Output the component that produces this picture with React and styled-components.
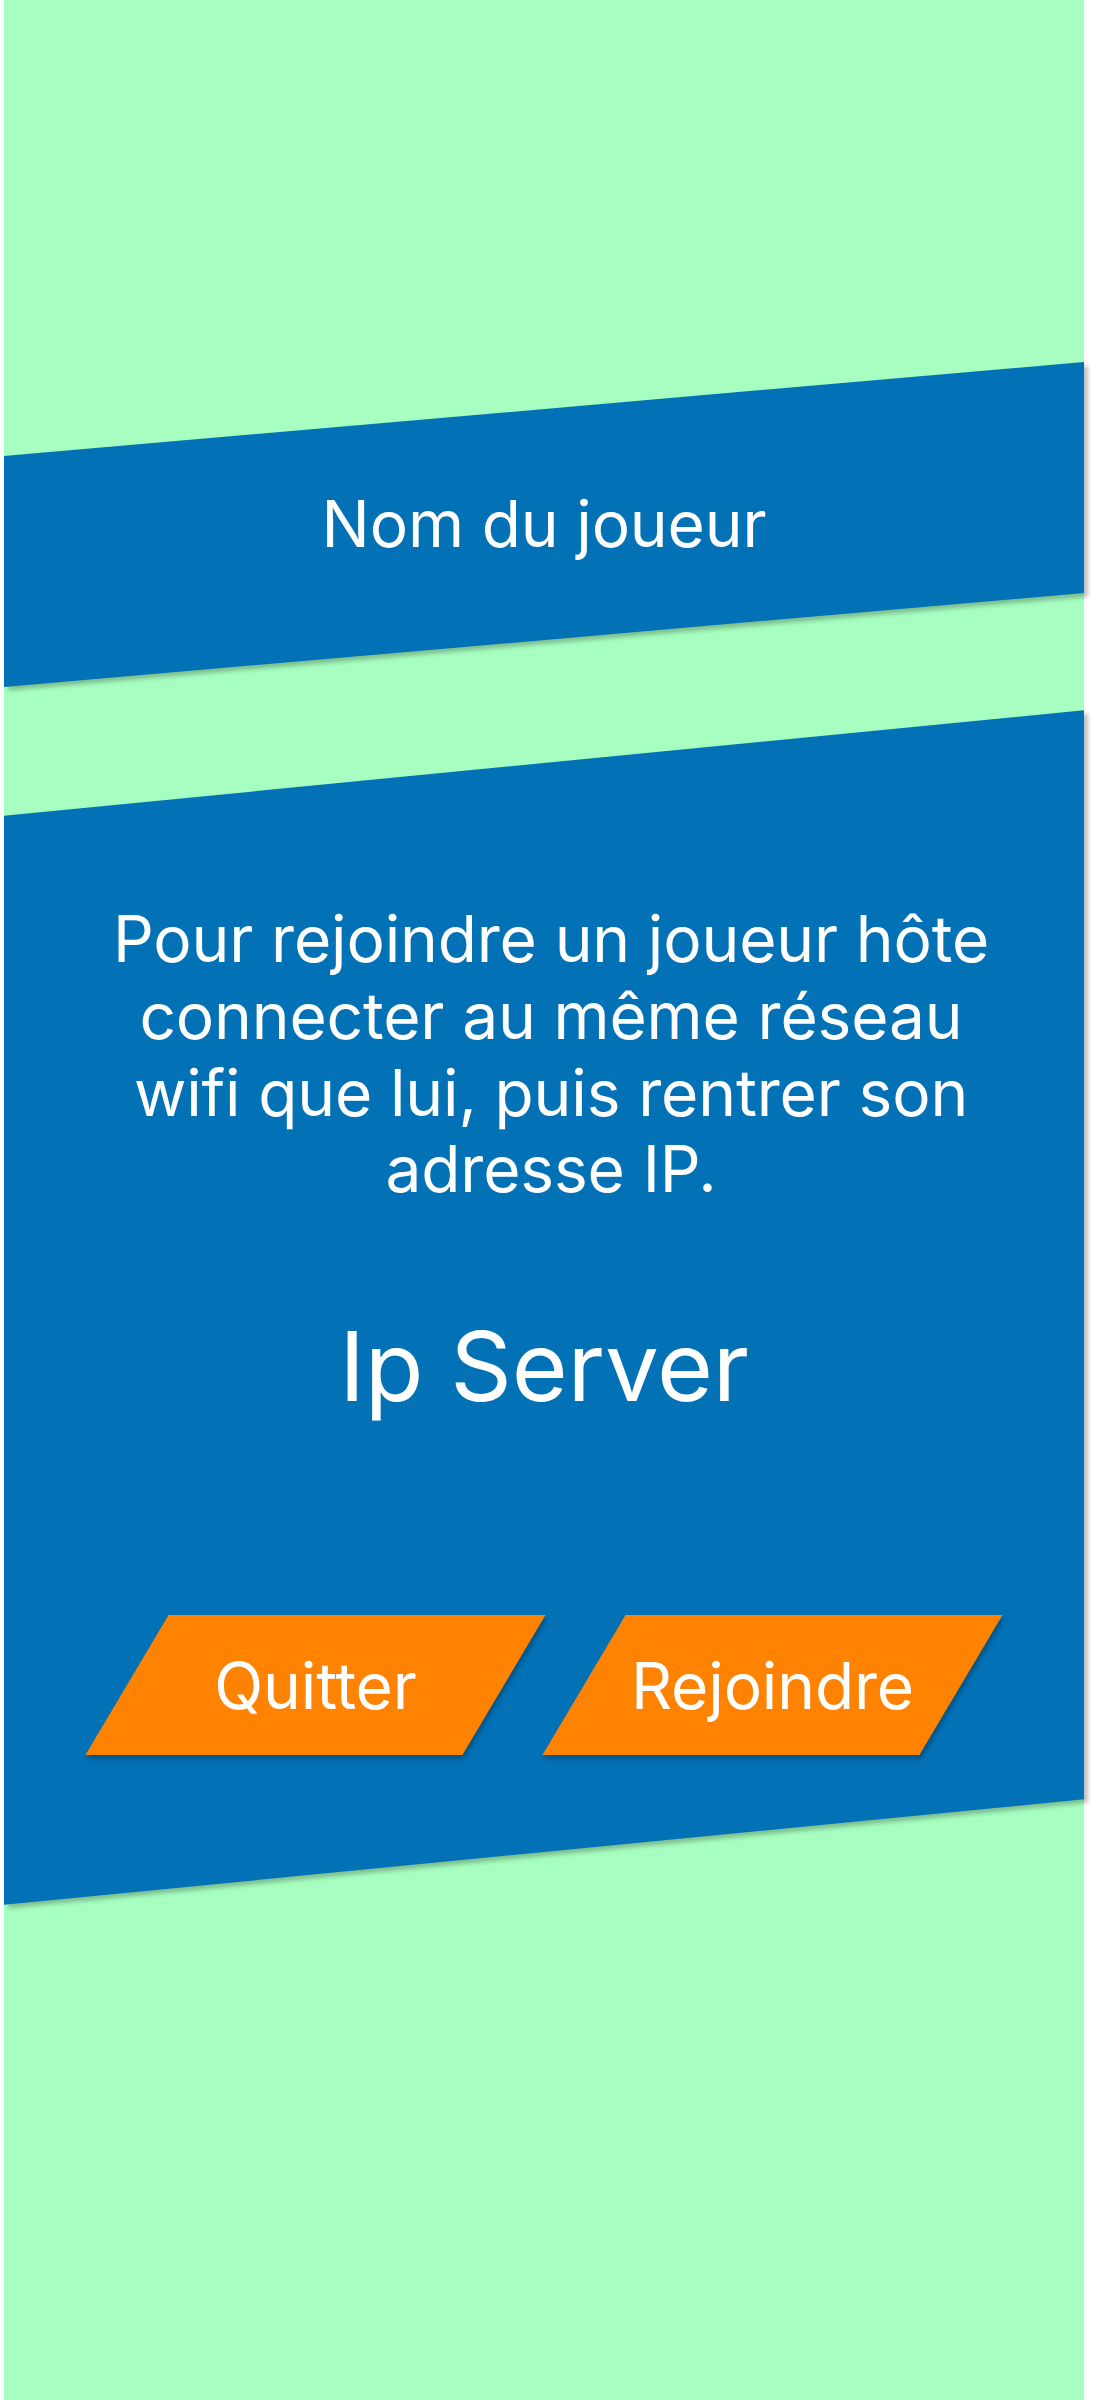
import styled, { createGlobalStyle } from "styled-components";

const GlobalStyle = createGlobalStyle`
  body {
    margin: 0;
    background: #ffffff;
    font-family: Inter, "Noto Sans", "Liberation Sans", sans-serif;
  }
`;

const Screen = styled.div`
  margin-left: 4px;
  width: 1080px;
  min-height: 2400px;
  background: #a6fec0;
  display: flex;
  flex-direction: column;
  gap: 123px;
  padding-top: 409px;
  box-sizing: border-box;
`;

// slanted blue band, the text inside stays straight
const Band = styled.section`
  position: relative;
  display: flex;
  flex-direction: column;
  align-items: center;
  justify-content: ${({ $top }) => ($top ? "flex-start" : "center")};
  box-sizing: border-box;
  height: ${({ $height }) => $height}px;
  padding: ${({ $padding }) => $padding || "0"};
  color: #ffffff;
  letter-spacing: -0.009em;

  &::before {
    content: "";
    position: absolute;
    inset: 0;
    background: #0271b5;
    transform: skewY(${({ $tilt }) => $tilt}deg);
    box-shadow: 4px 4px 4px rgba(0, 0, 0, 0.25);
  }

  & > * {
    position: relative;
  }
`;

const PlayerName = styled.div`
  font-size: 64px;
  line-height: 1.2;
  font-weight: 400;
`;

const Hint = styled.p`
  margin: 0;
  font-size: 64px;
  line-height: 1.2;
  text-align: center;
  align-self: stretch;
  padding: 0 86px 0 100px;
`;

const ServerField = styled.div`
  margin-top: 101px;
  font-size: 96px;
  line-height: 1.2;
`;

const Actions = styled.div`
  margin-top: 191px;
  display: flex;
  justify-content: center;
  gap: 80px;
`;

const SlantButton = styled.button`
  position: relative;
  width: 377px;
  height: 140px;
  border: none;
  background: transparent;
  padding: 0;
  font-family: inherit;
  font-size: 64px;
  letter-spacing: inherit;
  color: #ffffff;
  cursor: pointer;

  &::before {
    content: "";
    position: absolute;
    inset: 0;
    background: #ff8200;
    transform: skewX(-30.7deg);
    box-shadow: 4px 4px 4px rgba(0, 0, 0, 0.25);
  }

  span {
    position: relative;
  }
`;

const App = () => {
  return (
    <>
      <GlobalStyle />
      <Screen>
        <Band $height={231} $tilt={-4.97}>
          <PlayerName>Nom du joueur</PlayerName>
        </Band>
        <Band $height={1089} $tilt={-5.58} $padding="138px 0 96px" $top>
          <Hint>
            Pour rejoindre un joueur hôte connecter au même réseau wifi que lui,
            puis rentrer son adresse IP.
          </Hint>
          <ServerField>Ip Server</ServerField>
          <Actions>
            <SlantButton>
              <span>Quitter</span>
            </SlantButton>
            <SlantButton>
              <span>Rejoindre</span>
            </SlantButton>
          </Actions>
        </Band>
      </Screen>
    </>
  );
};

export default App;
